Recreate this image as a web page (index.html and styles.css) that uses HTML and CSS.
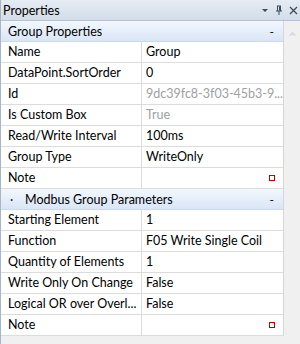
FILE: index.html
```html
<!DOCTYPE html>
<html lang="en">
<head>
    <meta charset="UTF-8">
    <title>Properties</title>
    <link rel="stylesheet" href="styles.css">
</head>
<body>
<div class="panel">
    <div class="titlebar">
        <span class="title">Properties</span>
        <span class="tools">
            <svg width="8" height="8" viewBox="0 0 8 8"><path d="M1 3h6l-3 3z" fill="#3b4a5e"/></svg>
            <svg width="8" height="10" viewBox="0 0 8 10"><path d="M2 1h4M2.5 1v5M5.5 1v5M1 6h6M4 6v4" stroke="#3b4a5e" fill="none"/><path d="M4.5 1.5v4" stroke="#3b4a5e"/></svg>
            <svg width="9" height="9" viewBox="0 0 9 9"><path d="M1 1l7 7M8 1l-7 7" stroke="#3b4a5e" stroke-width="1.3"/></svg>
        </span>
    </div>
    <div class="content">
        <div class="grid">
            <div class="cat"><span>Group Properties</span><span class="toggle">-</span></div>
            <div class="row"><div class="name">Name</div><div class="value">Group</div></div>
            <div class="row"><div class="name">DataPoint.SortOrder</div><div class="value">0</div></div>
            <div class="row"><div class="name">Id</div><div class="value muted">9dc39fc8-3f03-45b3-9...</div></div>
            <div class="row"><div class="name">Is Custom Box</div><div class="value muted">True</div></div>
            <div class="row"><div class="name">Read/Write Interval</div><div class="value">100ms</div></div>
            <div class="row"><div class="name">Group Type</div><div class="value">WriteOnly</div></div>
            <div class="row"><div class="name">Note</div><div class="value"><span class="note"></span></div></div>
            <div class="cat"><span><span class="dot">·</span>Modbus Group Parameters</span><span class="toggle">-</span></div>
            <div class="row"><div class="name">Starting Element</div><div class="value">1</div></div>
            <div class="row"><div class="name">Function</div><div class="value">F05 Write Single Coil</div></div>
            <div class="row"><div class="name">Quantity of Elements</div><div class="value">1</div></div>
            <div class="row"><div class="name">Write Only On Change</div><div class="value">False</div></div>
            <div class="row"><div class="name">Logical OR over Overl...</div><div class="value">False</div></div>
            <div class="row"><div class="name">Note</div><div class="value"><span class="note"></span></div></div>
        </div>
        <div class="scrollbar">
            <svg width="9" height="6" viewBox="0 0 9 6"><path d="M0.5 5.5h8l-4-4z" fill="#d8dce2"/></svg>
        </div>
    </div>
</div>
</body>
</html>
```

FILE: styles.css
```css
body {
    margin: 0;
    font-family: Lato, "Open Sans", sans-serif;
    font-size: 12.5px;
    color: #000;
    background-color: #f0f0f0;
}
.panel {
    width: 300px;
    height: 344px;
    box-sizing: border-box;
    border-left: 1px solid #a9b4c4;
    background-color: #f0f0f0;
}
.titlebar {
    height: 21px;
    box-sizing: border-box;
    border-bottom: 1px solid #b8c3d2;
    background: linear-gradient(#e6ecf4, #d3dce8);
    display: flex;
    align-items: center;
    justify-content: space-between;
    padding: 0 2px 0 2px;
}
.tools {
    display: flex;
    align-items: center;
    gap: 6px;
}
.tools svg {
    display: block;
}
.content {
    display: flex;
}
.grid {
    width: 282px;
    background-color: #fff;
    border-right: 1px solid #d6d6d6;
}
.cat {
    height: 21px;
    box-sizing: border-box;
    border-bottom: 1px solid #d0d7e2;
    background: linear-gradient(#f2f7fd, #d9e6f6);
    display: flex;
    align-items: center;
    justify-content: space-between;
    padding: 0 9px 0 7px;
    font-size: 12.5px;
}
.dot {
    display: inline-block;
    width: 15px;
    padding-left: 2px;
    color: #333;
}
.toggle {
    font-size: 12px;
}
.row {
    display: flex;
    height: 21px;
    box-sizing: border-box;
    border-bottom: 1px solid #dcdcdc;
}
.name {
    width: 141px;
    box-sizing: border-box;
    border-right: 1px solid #dcdcdc;
    padding-left: 7px;
    line-height: 20px;
    white-space: nowrap;
    overflow: hidden;
}
.value {
    flex: 1;
    padding-left: 4px;
    padding-right: 8px;
    line-height: 20px;
    white-space: nowrap;
    overflow: hidden;
    display: flex;
    align-items: center;
}
.muted {
    color: #a0a0a0;
}
.note {
    margin-left: auto;
    width: 4px;
    height: 4px;
    border: 1px solid #c00000;
}
.scrollbar {
    width: 17px;
    display: flex;
    justify-content: center;
    padding-top: 9px;
    align-items: flex-start;
}
```
